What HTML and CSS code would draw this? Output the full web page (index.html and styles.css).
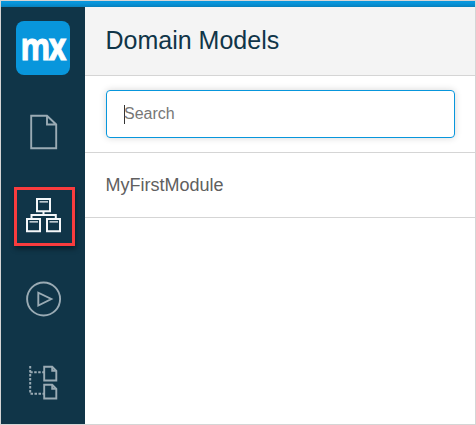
FILE: index.html
```html
<!DOCTYPE html>
<html lang="en">
<head>
<meta charset="utf-8">
<title>Domain Models</title>
<link rel="stylesheet" href="styles.css">
</head>
<body>
<div class="window">
  <div class="topbar"></div>
  <div class="layout">
    <nav class="sidebar">
      <div class="slot brand"><div class="logo"><span class="logo-text">mx</span></div></div>
      <a class="slot"><svg class="icon" width="36" height="36" viewBox="0 0 36 36"><path d="M5.2 1.8H21L30.2 10.5V34.2H5.2ZM21 1.8V10.5H30.2"/></svg></a>
      <a class="slot current"><span class="highlight"><svg class="icon active" width="36" height="36" viewBox="0 0 36 36"><path d="M11 .9h13v12.4h-13ZM1 20.9h13v12.4H1ZM21 20.9h13v12.4H21ZM17.5 13v4M5.5 20.5V17h24.3v3.5"/><path class="thin" d="M13.5 3.8h8.5M3.5 23.8h8.5M23.5 23.8h8.5"/></svg></span></a>
      <a class="slot"><svg class="icon" width="36" height="36" viewBox="0 0 36 36"><circle cx="17.6" cy="18" r="16.5"/><path d="M12.3 11.7V24.5L25.3 18Z"/></svg></a>
      <a class="slot"><svg class="icon" width="36" height="36" viewBox="0 0 36 36"><path d="M18.2 1.7h8l4.1 4.1v9.7H18.2ZM26.2 1.7v4.1h4.1M18.2 19.7h8l4.1 4.1v9.7H18.2ZM26.2 19.7v4.1h4.1"/><path class="dots" d="M4.2 1v27.7H18M4.2 7.3h14"/></svg></a>
    </nav>
    <main class="panel">
      <header class="header"><h1>Domain Models</h1></header>
      <div class="search"><div class="field"><span class="caret"></span><span class="hint">Search</span></div></div>
      <div class="module">MyFirstModule</div>
    </main>
  </div>
</div>
</body>
</html>
```
FILE: styles.css
```css
* { box-sizing: border-box; }
body { margin: 0; font-family: "Liberation Sans", Arial, sans-serif; background: #fff; }
.window { width: 476px; height: 425px; border: 1px solid #d5d5d5; overflow: hidden; }
.topbar { height: 6px; background: linear-gradient(#0896dc 30%, #0780bd); }
.layout { display: flex; height: 417px; }
.sidebar { width: 84px; background: #103548; flex: none; display: flex; flex-direction: column; }
.slot { height: 83.6px; flex: none; display: flex; align-items: center; justify-content: center; padding-left: 2px; }
.current { padding-top: 2px; }
.brand { height: 83px; align-items: flex-start; padding: 14px 0 0 0; }
.logo { width: 54px; height: 54px; border-radius: 8px; background: #0896dc; display: flex; align-items: center; justify-content: center; }
.logo-text { font: bold 38px/54px "Open Sans", sans-serif; letter-spacing: -2px; color: #fff; -webkit-text-stroke: 1px #fff; transform: translateY(-3.5px) scaleX(.8); }
.icon { display: block; fill: none; stroke: #9aabb4; stroke-width: 1.9; }
.active { stroke: #f4f7f9; stroke-width: 2; }
.thin { stroke-width: 1.2; }
.dots { stroke-width: 2; stroke-dasharray: 2.5 1.5; }
.highlight { flex: none; width: 61px; height: 59px; border: 3px solid #fa3c3e; display: flex; align-items: center; justify-content: center; box-shadow: 1px 3px 5px rgba(0, 0, 0, .4); }
.panel { flex: 1; background: #fff; }
.header { height: 69px; background: #f4f4f4; border-bottom: 1px solid #d5d5d5; padding: 17px 0 0 20.5px; }
h1 { margin: 0; font-size: 25px; line-height: 33px; font-weight: 400; color: #103548; }
.search { height: 77px; padding: 14px 20.5px 0 20.5px; border-bottom: 1px solid #d5d5d5; }
.field { height: 48px; border: 1px solid #0896dc; border-radius: 4px; box-shadow: 0 0 7px rgba(0, 0, 0, .16); display: flex; align-items: center; padding-left: 17px; }
.caret { width: 1px; height: 19px; background: #333; }
.hint { margin-left: -.5px; font-size: 16px; color: #777; line-height: 20px; }
.module { height: 65px; padding-left: 20.5px; border-bottom: 1px solid #d5d5d5; font-size: 18px; line-height: 64px; color: #606060; }
```
